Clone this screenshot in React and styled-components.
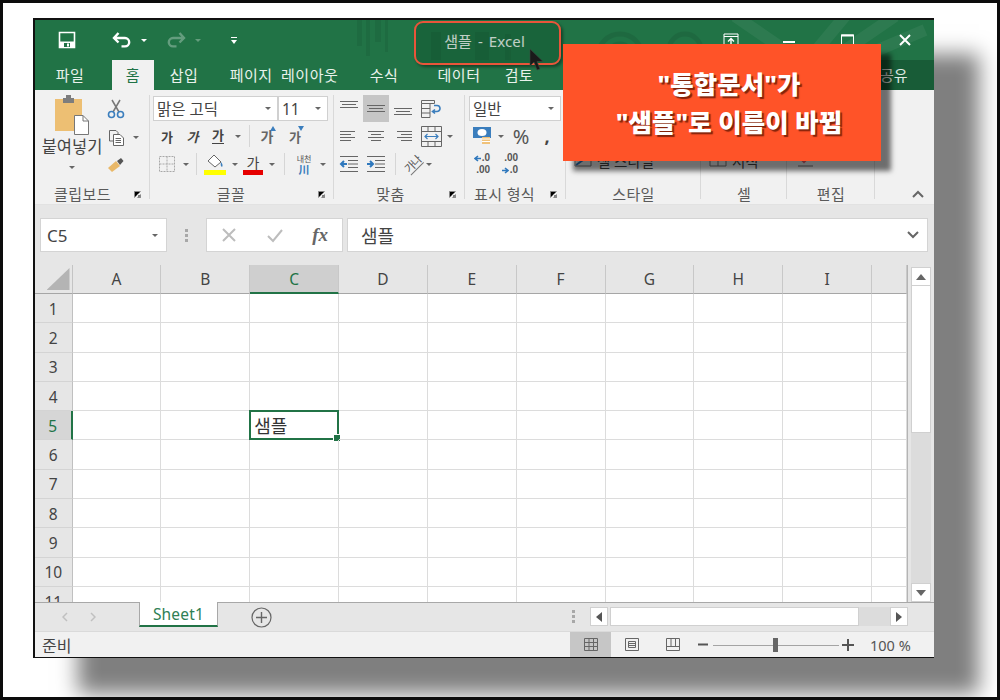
import styled, { createGlobalStyle } from "styled-components";

const GlobalStyle = createGlobalStyle`
  html, body { margin: 0; padding: 0; background: #fff; }
  * { box-sizing: border-box; }
  body { font-family: "Noto Sans", "Noto Sans CJK KR", sans-serif; }
`;

const Frame = styled.div`
  width: 1000px;
  height: 700px;
  border: 3px solid #0c0c0c;
  padding: 15px 0 0 30px;
  background: #fff;
  overflow: hidden;
`;

const Win = styled.div`
  position: relative;
  width: 901px;
  height: 640px;
  display: flex;
  flex-direction: column;
  background: #f1f1f1;
  border-top: 2px solid #111;
  border-left: 2px solid #111;
  border-bottom: 1px solid #111;
  box-shadow: 45px 36px 20px #7f7f7f;
`;

const TitleBar = styled.div`
  position: relative;
  height: 40px;
  display: grid;
  grid-template-columns: 1fr auto 1fr;
  align-items: center;
  background: #217346;
  color: #fff;
  overflow: hidden;
`;

const Watermark = styled.svg`
  position: absolute;
  left: 0;
  top: 0;
  width: 899px;
  height: 70px;
`;

const Qat = styled.div`
  position: relative;
  display: flex;
  align-items: center;
  padding-left: 22px;
`;

const Slot = styled.div`
  width: ${(p) => p.$w}px;
  height: ${(p) => p.$h || 26}px;
  flex: none;
  display: flex;
  align-items: center;
  justify-content: center;
  position: relative;
  color: ${(p) => p.$color || "#444"};
  font-size: ${(p) => p.$size || 13}px;
  font-weight: ${(p) => p.$weight || 400};
  font-style: ${(p) => (p.$italic ? "italic" : "normal")};
  background: ${(p) => (p.$on ? "#c6c6c6" : "transparent")};
`;

const Caret = styled.i`
  display: block;
  width: 0;
  height: 0;
  border-left: 3px solid transparent;
  border-right: 3px solid transparent;
  border-top: 3px solid ${(p) => p.$color || "#666"};
`;

const TitleText = styled.div`
  position: relative;
  font-size: 15px;
  color: #f6faf7;
  letter-spacing: 0.1px;
  word-spacing: 2px;
`;

const WinBtns = styled.div`
  position: relative;
  display: flex;
  justify-content: flex-end;
`;

const TabRow = styled.div`
  position: relative;
  height: 30px;
  display: flex;
  background: #217346;
`;

const Tab = styled.div`
  width: ${(p) => p.$w}px;
  margin-right: ${(p) => p.$mr || 0}px;
  padding-bottom: 2px;
  display: flex;
  align-items: center;
  justify-content: center;
  white-space: nowrap;
  font-size: 15px;
  letter-spacing: 0.5px;
  word-spacing: 4px;
  color: ${(p) => (p.$active ? "#217346" : "#e9f2ec")};
  background: ${(p) => (p.$active ? "#f1f1f1" : "transparent")};
`;

const ShareTab = styled.div`
  margin-left: auto;
  width: 56px;
  background: #185c37;
  display: flex;
  align-items: center;
  padding: 0 0 2px 2px;
  font-size: 15px;
  color: #dfeae3;
`;

const Ribbon = styled.div`
  position: relative;
  height: 115px;
  display: flex;
  background: #f1f1f1;
  border-bottom: 1px solid #e2e2e2;
`;

const Group = styled.div`
  width: ${(p) => p.$w}px;
  flex: none;
  display: flex;
  flex-direction: column;
  padding: 5px 0 0 ${(p) => p.$pad || 0}px;
  position: relative;
  &::after {
    content: "";
    position: absolute;
    right: 0;
    top: 5px;
    bottom: 5px;
    width: 1px;
    background: #d9d9d9;
  }
`;

const GroupBody = styled.div`
  height: 87px;
  display: flex;
  flex-direction: ${(p) => (p.$row ? "row" : "column")};
  justify-content: ${(p) => (p.$end ? "flex-end" : "flex-start")};
`;

const GroupLabel = styled.div`
  flex: 1;
  display: flex;
  align-items: center;
  justify-content: center;
  position: relative;
  font-size: 15px;
  letter-spacing: 0.4px;
  color: #5a5a5a;
  margin-left: ${(p) => (p.$pad ? -p.$pad : 0)}px;
  padding-right: ${(p) => p.$right || 0}px;
`;

const Launcher = styled.svg`
  position: absolute;
  right: 9px;
  top: 9px;
  width: 7px;
  height: 7px;
`;

const Row = styled.div`
  display: flex;
  align-items: center;
  height: ${(p) => p.$h || 28}px;
`;

const Sep = styled.div`
  width: 1px;
  height: 22px;
  flex: none;
  margin: 0 ${(p) => p.$m}px;
  background: #d6d6d6;
`;

const Select = styled.div`
  width: ${(p) => p.$w}px;
  height: 25px;
  flex: none;
  display: flex;
  align-items: center;
  justify-content: space-between;
  padding: 0 6px 0 3px;
  background: #fff;
  border: 1px solid #d0d0d0;
  font-size: 15.5px;
  color: #444;
`;

const PasteCol = styled.div`
  width: 70px;
  display: flex;
  flex-direction: column;
  align-items: center;
  font-size: 16.5px;
  color: #444;
  padding-left: 4px;
`;

const PasteLabel = styled.div`
  margin: 2px 0 9px;
  line-height: 20px;
  white-space: nowrap;
`;

const ClipCol = styled.div`
  display: flex;
  flex-direction: column;
`;

const Under = styled.span`
  border-bottom: 1px solid #444;
  line-height: 15px;
`;

const GrowMark = styled.svg`
  position: absolute;
  top: 3px;
  right: ${(p) => p.$right}px;
  width: 6px;
  height: 5px;
`;

const ColorBar = styled.span`
  position: absolute;
  left: ${(p) => p.$left}px;
  right: ${(p) => p.$left}px;
  bottom: 2px;
  height: 5px;
  background: ${(p) => p.$c};
`;

const Phonetic = styled.div`
  display: flex;
  flex-direction: column;
  align-items: center;
  font-size: 8px;
  line-height: 10px;
  color: #555;
  b {
    color: #3b7ebd;
    font-size: 11px;
    line-height: 11px;
    font-weight: 700;
  }
`;

const Rotated = styled.span`
  display: block;
  transform: rotate(-45deg);
  font-size: 11px;
  line-height: 12px;
  color: #555;
  letter-spacing: -1px;
  border-bottom: 1px solid #777;
`;

const Decimal = styled.div`
  display: flex;
  flex-direction: column;
  align-items: ${(p) => (p.$end ? "flex-end" : "flex-start")};
  font-family: "Liberation Sans", sans-serif;
  font-size: 10px;
  line-height: 12px;
  font-weight: 700;
  color: #555;
  span {
    display: flex;
    align-items: center;
    gap: 1px;
  }
`;

const HiddenLine = styled.div`
  display: flex;
  align-items: center;
  gap: ${(p) => p.$gap || 6}px;
  height: 28px;
  margin-bottom: 8px;
  padding-left: ${(p) => p.$left}px;
  font-size: 14.5px;
  color: #444;
  white-space: nowrap;
`;

const Collapse = styled.div`
  flex: 1;
  display: flex;
  align-items: flex-end;
  justify-content: flex-end;
  padding: 0 10px 6px 0;
`;

const FormulaBar = styled.div`
  height: 60px;
  display: flex;
  align-items: flex-start;
  padding: 13px 0 0 5px;
  background: #e6e6e6;
`;

const FieldBox = styled.div`
  height: 34px;
  width: ${(p) => p.$w}px;
  flex: none;
  margin-left: ${(p) => p.$ml || 0}px;
  display: flex;
  align-items: center;
  justify-content: space-between;
  padding: 0 ${(p) => p.$pr || 8}px 0 ${(p) => p.$pl || 6}px;
  background: #fff;
  border: 1px solid #d4d4d4;
  font-size: ${(p) => p.$size || 17}px;
  color: #444;
`;

const FxMark = styled.em`
  font-family: "Liberation Serif", serif;
  font-size: 19px;
  font-weight: 700;
  color: #666;
`;

const Grip = styled.div`
  width: 39px;
  height: 34px;
  flex: none;
  display: flex;
  flex-direction: column;
  align-items: center;
  justify-content: center;
  gap: 2px;
  i {
    width: 3px;
    height: 3px;
    background: #a8a8a8;
  }
`;

const SheetArea = styled.div`
  height: 337px;
  display: flex;
  background: #e6e6e6;
`;

const Sheet = styled.div`
  width: 873px;
  height: 337px;
  flex: none;
  overflow: hidden;
  display: grid;
  grid-template-columns: 37.5px repeat(9, 88.85px) 1fr;
  grid-template-rows: 29px;
  grid-auto-rows: 29.3px;
  background: #fff;
  border-right: 1px solid #b4b4b4;
`;

const Corner = styled.div`
  background: #e6e6e6;
  border-right: 1px solid #c4c4c4;
  border-bottom: 1px solid #a6a6a6;
  position: relative;
  &::after {
    content: "";
    position: absolute;
    right: 2px;
    bottom: 3px;
    width: 23px;
    height: 22px;
    background: #b4b4b4;
    clip-path: polygon(100% 0, 100% 100%, 0 100%);
  }
`;

const ColHead = styled.div`
  display: flex;
  align-items: center;
  justify-content: center;
  font-size: 15.5px;
  background: ${(p) => (p.$on ? "#cfcfcf" : "#e6e6e6")};
  color: ${(p) => (p.$on ? "#217346" : "#444")};
  border-right: 1px solid #c8c8c8;
  border-bottom: ${(p) => (p.$on ? "2px solid #217346" : "1px solid #a6a6a6")};
`;

const RowHead = styled.div`
  display: flex;
  align-items: center;
  justify-content: center;
  padding-top: 1px;
  font-size: 15.5px;
  background: ${(p) => (p.$on ? "#d6d6d6" : "#e6e6e6")};
  color: ${(p) => (p.$on ? "#217346" : "#444")};
  border-right: ${(p) => (p.$on ? "2px solid #217346" : "1px solid #c0c0c0")};
  border-bottom: 1px solid #d4d4d4;
`;

const Cell = styled.div`
  position: relative;
  display: flex;
  align-items: center;
  padding-left: 4px;
  font-size: 18px;
  color: #333;
  border-right: 1px solid #dcdcdc;
  border-bottom: 1px solid #dcdcdc;
`;

const Selection = styled.div`
  position: absolute;
  inset: -1px -1px -1px -1px;
  border: 2px solid #217346;
  &::after {
    content: "";
    position: absolute;
    right: -4px;
    bottom: -4px;
    width: 6px;
    height: 6px;
    background: #217346;
    border: 1px solid #fff;
  }
`;

const VScroll = styled.div`
  flex: 1;
  display: flex;
  flex-direction: column;
  padding: 2px 3px 0 3px;
`;

const ScrollBtn = styled.div`
  width: ${(p) => p.$w || 19}px;
  height: ${(p) => p.$h || 19}px;
  margin-left: ${(p) => p.$ml || 0}px;
  flex: none;
  display: flex;
  align-items: center;
  justify-content: center;
  background: #fff;
  border: 1px solid #d0d0d0;
`;

const VThumb = styled.div`
  height: 147px;
  background: #fff;
  border: 1px solid #d0d0d0;
  border-top: none;
`;

const VTrack = styled.div`
  flex: 1;
  background: #dcdcdc;
`;

const SheetBar = styled.div`
  height: 29px;
  display: flex;
  align-items: flex-start;
  background: #e6e6e6;
  border-top: 1px solid #a8a8a8;
`;

const SheetNav = styled.div`
  width: 104px;
  height: 28px;
  display: flex;
  align-items: center;
  padding-left: 27px;
  gap: 22px;
`;

const SheetTab = styled.div`
  width: 79px;
  height: 25px;
  margin-top: -1px;
  display: flex;
  align-items: center;
  justify-content: center;
  background: #fff;
  border-left: 1px solid #a8a8a8;
  border-right: 1px solid #a8a8a8;
  border-bottom: 2px solid #217346;
  color: #2f8055;
  font-size: 15.5px;
  letter-spacing: 0.2px;
`;

const AddSheet = styled.div`
  margin: 4px 0 0 33px;
  width: 21px;
  height: 21px;
  display: flex;
  align-items: center;
  justify-content: center;
`;

const HScrollWrap = styled.div`
  margin-left: auto;
  width: 374px;
  height: 28px;
  padding: 4px 26px 0 0;
  display: flex;
  align-items: flex-start;
`;

const Dots = styled(Grip)`
  width: 26px;
  height: 18px;
`;

const HThumb = styled.div`
  width: 249px;
  height: 19px;
  margin-left: 2px;
  background: #fff;
  border: 1px solid #d0d0d0;
`;

const HTrack = styled.div`
  flex: 1;
  height: 19px;
  background: #dcdcdc;
`;

const StatusBar = styled.div`
  flex: 1;
  display: flex;
  align-items: stretch;
  background: #f1f1f1;
  border-top: 1px solid #dadada;
  font-size: 16px;
  color: #444;
`;

const Ready = styled.div`
  display: flex;
  align-items: center;
  padding-left: 7px;
`;

const StatusRight = styled.div`
  margin-left: auto;
  display: flex;
  align-items: stretch;
  padding-right: 22px;
`;

const ViewBtn = styled.div`
  width: 41px;
  display: flex;
  align-items: center;
  justify-content: center;
  background: ${(p) => (p.$on ? "#c6c6c6" : "transparent")};
`;

const ZoomMark = styled.div`
  width: ${(p) => p.$w}px;
  display: flex;
  align-items: center;
  justify-content: center;
  svg { display: block; }
`;

const ZoomTrack = styled.div`
  width: 126px;
  position: relative;
  &::before {
    content: "";
    position: absolute;
    left: 0;
    right: 0;
    top: 50%;
    height: 1px;
    background: #a4a4a4;
  }
`;

const ZoomThumb = styled.i`
  position: absolute;
  left: 60px;
  top: 6px;
  width: 5px;
  height: 14px;
  background: #666;
`;

const ZoomText = styled.div`
  width: 42px;
  margin-left: 13px;
  display: flex;
  align-items: center;
  white-space: nowrap;
  font-size: 14.5px;
  color: #555;
`;

const TitleMark = styled.div`
  position: absolute;
  left: 379px;
  top: 1px;
  width: 147px;
  height: 44px;
  border: 2.5px solid #e9553a;
  border-radius: 9px;
  background: rgba(0, 50, 25, 0.22);
  box-shadow: 2px 2px 3px rgba(0, 0, 0, 0.4);
`;

const Pointer = styled.svg`
  position: absolute;
  left: 494px;
  top: 28px;
  width: 16px;
  height: 24px;
`;

const Callout = styled.div`
  position: absolute;
  left: 528px;
  top: 24px;
  width: 318px;
  height: 117px;
  padding-left: 14px;
  display: flex;
  flex-direction: column;
  align-items: center;
  justify-content: center;
  background: #ff5328;
  color: #fff;
  font-size: 25.5px;
  font-weight: 800;
  line-height: 38px;
  white-space: nowrap;
  text-shadow: 2px 2px 1px rgba(90, 20, 0, 0.75);
  box-shadow: 10px 10px 5px rgba(0, 0, 0, 0.55);
`;

const Icon = ({ w = 16, h = 16, children, ...rest }) => (
  <svg width={w} height={h} viewBox={`0 0 ${w} ${h}`} fill="none" {...rest}>
    {children}
  </svg>
);

const LauncherMark = () => (
  <Launcher viewBox="0 0 7 7">
    <path d="M.5 6.5V.5H6.5M3 3L6.5 6.5M6.5 3.5V6.5H3.5" stroke="#888" />
  </Launcher>
);

const Lines = ({ rows, stroke = "#666" }) => (
  <Icon w={20} h={20}>
    {rows.map(([x1, x2, y]) => (
      <path key={y} d={`M${x1} ${y + 0.5}H${x2}`} stroke={stroke} />
    ))}
  </Icon>
);

const alignRows = (kind) => {
  const top = kind === "top" ? 2 : kind === "mid" ? 6 : 9;
  if (kind === "top" || kind === "mid" || kind === "bot") {
    return [[1, 19, top], [3, 17, top + 3], [1, 19, top + 6]];
  }
  if (kind === "left") return [[1, 16, 5], [1, 12, 8], [1, 16, 11], [1, 12, 14]];
  if (kind === "center") return [[2, 18, 5], [5, 15, 8], [2, 18, 11], [5, 15, 14]];
  return [[4, 19, 5], [8, 19, 8], [4, 19, 11], [8, 19, 14]];
};

const columns = ["A", "B", "C", "D", "E", "F", "G", "H", "I", ""];
const rowNums = [1, 2, 3, 4, 5, 6, 7, 8, 9, 10, 11];

export default function App() {
  return (
    <Frame>
      <GlobalStyle />
      <Win>
        <TitleBar>
          <Watermark viewBox="0 0 899 70">
            <g fill="#000" opacity="0.06">
              <rect x="322" y="-2" width="5" height="28" />
              <rect x="331" y="-2" width="4" height="38" />
              <rect x="340" y="-2" width="6" height="24" />
              <rect x="350" y="-2" width="3" height="34" />
              <rect x="396" y="12" width="10" height="30" />
              <rect x="440" y="12" width="14" height="30" />
              <rect x="470" y="14" width="6" height="30" />
            </g>
            <g stroke="#000" opacity="0.08" fill="none" strokeWidth="5">
              <circle cx="585" cy="36" r="12" />
              <circle cx="585" cy="36" r="22" />
              <circle cx="650" cy="30" r="16" />
            </g>
            <g stroke="#fff" opacity="0.05" strokeWidth="12">
              <path d="M700 -4L770 44" />
              <path d="M810 -4L770 44" />
              <path d="M860 -4L790 44" />
              <path d="M890 10L810 44" />
            </g>
          </Watermark>
          <Qat>
            <Slot $w={20} $h={40}>
              <Icon w={18} h={18}>
                <path d="M1.5 1.5H16.5V16.5H1.5Z" stroke="#fff" strokeWidth="1.6" />
                <path d="M2 10.5H16V16H2Z" fill="#fff" />
                <path d="M6 12H12V16H6Z" fill="#217346" />
                <path d="M9 12.5H11V15.5H9Z" fill="#fff" />
              </Icon>
            </Slot>
            <Slot $w={34} $h={40} />
            <Slot $w={22} $h={40}>
              <Icon w={20} h={18}>
                <path d="M2 7H13A4.2 4.2 0 0 1 13 15.4H9.5M6.5 2L2 7L6.5 11.5" stroke="#fff" strokeWidth="2.4" />
              </Icon>
            </Slot>
            <Slot $w={22} $h={40}><Caret $color="#fff" /></Slot>
            <Slot $w={10} $h={40} />
            <Slot $w={22} $h={40}>
              <Icon w={20} h={18} opacity="0.3">
                <path d="M18 7H7A4.2 4.2 0 0 0 7 15.4H10.5M13.5 2L18 7L13.5 11.5" stroke="#fff" strokeWidth="2.4" />
              </Icon>
            </Slot>
            <Slot $w={22} $h={40}><Caret $color="#ffffff4d" /></Slot>
            <Slot $w={14} $h={40} />
            <Slot $w={22} $h={40}>
              <Icon w={8} h={9}>
                <path d="M1 1.5H7" stroke="#fff" />
                <path d="M1 4H7L4 8Z" fill="#fff" />
              </Icon>
            </Slot>
          </Qat>
          <TitleText>샘플 - Excel</TitleText>
          <WinBtns>
            <Slot $w={58} $h={40}>
              <Icon w={16} h={14}>
                <path d="M1 1H15V13H1Z" stroke="#fff" />
                <path d="M1 3.5H15" stroke="#fff" />
                <path d="M8 12V6M5 8.5L8 5.5L11 8.5" stroke="#fff" strokeWidth="1.4" />
              </Icon>
            </Slot>
            <Slot $w={58} $h={40}>
              <Icon w={12} h={12}><path d="M0 8H12" stroke="#fff" strokeWidth="2" /></Icon>
            </Slot>
            <Slot $w={58} $h={40}>
              <Icon w={13} h={13}>
                <path d="M.5 1H12.5V12.5H.5Z" stroke="#fff" />
                <path d="M0 1.5H13" stroke="#fff" strokeWidth="2" />
              </Icon>
            </Slot>
            <Slot $w={58} $h={40}>
              <Icon w={14} h={14}><path d="M2 2L12 12M12 2L2 12" stroke="#fff" strokeWidth="2" /></Icon>
            </Slot>
          </WinBtns>
        </TitleBar>

        <TabRow>
          <Tab $w={70} $mr={7}>파일</Tab>
          <Tab $active $w={42}>홈</Tab>
          <Tab $w={60}>삽입</Tab>
          <Tab $w={140}>페이지 레이아웃</Tab>
          <Tab $w={60}>수식</Tab>
          <Tab $w={90}>데이터</Tab>
          <Tab $w={30}>검토</Tab>
          <ShareTab>공유</ShareTab>
        </TabRow>

        <Ribbon>
          <Group $w={115}>
            <GroupBody $row>
              <PasteCol>
                <Icon w={36} h={40}>
                  <path d="M1 4H28V36H1Z" fill="#edbf73" />
                  <path d="M9 3H20V8H9Z" fill="#7d7d7d" />
                  <path d="M12 0H17V4H12Z" fill="#7d7d7d" />
                  <path d="M20.5 20.5H29L34.5 26V39.5H20.5Z" fill="#fff" stroke="#777" />
                  <path d="M29 20.5V26H34.5" stroke="#777" />
                </Icon>
                <PasteLabel>붙여넣기</PasteLabel>
                <Caret />
              </PasteCol>
              <ClipCol>
                <Slot $w={22} $h={28}>
                  <Icon w={18} h={20}>
                    <path d="M5 1L12 13M13 1L6 13" stroke="#777" strokeWidth="1.5" />
                    <circle cx="4.5" cy="15.5" r="3" stroke="#3b7ebd" strokeWidth="1.6" />
                    <circle cx="13.5" cy="15.5" r="3" stroke="#3b7ebd" strokeWidth="1.6" />
                  </Icon>
                </Slot>
                <Row>
                  <Slot $w={22} $h={28}>
                    <Icon w={17} h={17}>
                      <path d="M1.5 1.5H8L10 3.5V5M1.5 1.5V12H5" stroke="#666" />
                      <path d="M5.5 5.5H12L15.5 9V16.5H5.5Z" fill="#fff" stroke="#666" />
                      <path d="M7.5 9.5H13M7.5 11.5H13M7.5 13.5H13" stroke="#666" />
                    </Icon>
                  </Slot>
                  <Slot $w={18} $h={28}><Caret /></Slot>
                </Row>
                <Slot $w={22} $h={27}>
                  <Icon w={18} h={16}>
                    <path d="M1 11L9 4L13 9L5 15Z" fill="#e9b868" />
                    <path d="M10 4L14 1L16.5 4L13 8Z" fill="#555" />
                  </Icon>
                </Slot>
              </ClipCol>
            </GroupBody>
            <GroupLabel $right={20}>
              클립보드
              <LauncherMark />
            </GroupLabel>
          </Group>

          <Group $w={184} $pad={3}>
            <GroupBody>
              <Row $h={27}>
                <Select $w={125}>맑은 고딕<Caret /></Select>
                <Select $w={50}>11<Caret /></Select>
              </Row>
              <Row>
                <Slot $w={28} $weight={700}>가</Slot>
                <Slot $w={23} $weight={700} $italic>가</Slot>
                <Slot $w={28} $weight={700}><Under>가</Under></Slot>
                <Slot $w={12}><Caret /></Slot>
                <Sep $m={5} />
                <Slot $w={24} $weight={700} $color="#666" $size={14}>
                  가
                  <GrowMark $right={3} viewBox="0 0 6 5"><path d="M0 5L3 0L6 5Z" fill="#3b7ebd" /></GrowMark>
                </Slot>
                <Slot $w={32} $weight={700} $color="#666" $size={13}>
                  가
                  <GrowMark $right={7} viewBox="0 0 6 5"><path d="M0 0L3 5L6 0Z" fill="#3b7ebd" /></GrowMark>
                </Slot>
              </Row>
              <Row>
                <Slot $w={27}>
                  <Icon w={18} h={18}>
                    <path d="M1.5 1.5H16.5V16.5H1.5ZM9 1.5V16.5M1.5 9H16.5" stroke="#a8a8a8" strokeDasharray="2 1" />
                  </Icon>
                </Slot>
                <Slot $w={12}><Caret /></Slot>
                <Sep $m={4} />
                <Slot $w={28}>
                  <Icon w={18} h={15} style={{ marginTop: -6 }}>
                    <path d="M8 1L15 8L9 13L2 7Z" stroke="#666" fill="#fff" />
                    <path d="M15 8Q17.5 11 16 13Q14 12 15 8Z" fill="#3b7ebd" />
                  </Icon>
                  <ColorBar $left={3} $c="#ffff00" />
                </Slot>
                <Slot $w={12}><Caret /></Slot>
                <Slot $w={24} $size={14}>
                  <span style={{ marginTop: -5 }}>가</span>
                  <ColorBar $left={2} $c="#e60000" />
                </Slot>
                <Slot $w={14}><Caret /></Slot>
                <Sep $m={5} />
                <Slot $w={28}><Phonetic>내천<b>川</b></Phonetic></Slot>
                <Slot $w={10}><Caret /></Slot>
              </Row>
            </GroupBody>
            <GroupLabel $pad={3} $right={22}>
              글꼴
              <LauncherMark />
            </GroupLabel>
          </Group>

          <Group $w={131} $pad={1}>
            <GroupBody>
              <Row $h={27}>
                <Slot $w={28} $h={27}><Lines rows={alignRows("top")} /></Slot>
                <Slot $w={26} $h={27} $on><Lines rows={alignRows("mid")} /></Slot>
                <Slot $w={28} $h={27}><Lines rows={alignRows("bot")} /></Slot>
                <Slot $w={28} $h={27}>
                  <Icon w={22} h={20}>
                    <path d="M1.5 1.5H14.5V4.5H1.5ZM1.5 4.5V18.5H10V4.5M1.5 9.5H10M1.5 14H10" stroke="#666" />
                    <path d="M14 6.5H17A3 3 0 0 1 17 12.5H13M15 10.5L12.5 12.5L15 14.5" stroke="#3b7ebd" strokeWidth="1.6" />
                  </Icon>
                </Slot>
              </Row>
              <Row>
                <Slot $w={28}><Lines rows={alignRows("left")} /></Slot>
                <Slot $w={26}><Lines rows={alignRows("center")} /></Slot>
                <Slot $w={28}><Lines rows={alignRows("right")} /></Slot>
                <Slot $w={28}>
                  <Icon w={21} h={21}>
                    <path d="M.5 .5H20.5V20.5H.5ZM.5 5.5H20.5M.5 15.5H20.5M7 .5V5.5M14 .5V5.5M7 15.5V20.5M14 15.5V20.5" stroke="#666" />
                    <path d="M4 10.5H17M6.5 8L4 10.5L6.5 13M14.5 8L17 10.5L14.5 13" stroke="#3b7ebd" strokeWidth="1.2" />
                  </Icon>
                </Slot>
                <Slot $w={10}><Caret /></Slot>
              </Row>
              <Row>
                <Slot $w={28}>
                  <Icon w={20} h={18}>
                    <path d="M1 1.5H19M9 5.5H19M9 9H19M9 12.5H19M1 16.5H19" stroke="#666" />
                    <path d="M2 9H8M5 6L2 9L5 12" stroke="#2f78bd" strokeWidth="2" />
                  </Icon>
                </Slot>
                <Slot $w={26}>
                  <Icon w={20} h={18}>
                    <path d="M1 1.5H19M9 5.5H19M9 9H19M9 12.5H19M1 16.5H19" stroke="#666" />
                    <path d="M1 9H7M4 6L7 9L4 12" stroke="#2f78bd" strokeWidth="2" />
                  </Icon>
                </Slot>
                <Sep $m={6} />
                <Slot $w={22}><Rotated>가나</Rotated></Slot>
                <Slot $w={10}><Caret /></Slot>
              </Row>
            </GroupBody>
            <GroupLabel $pad={1} $right={18}>
              맞춤
              <LauncherMark />
            </GroupLabel>
          </Group>

          <Group $w={101} $pad={4}>
            <GroupBody>
              <Row $h={27}>
                <Select $w={92}>일반<Caret /></Select>
              </Row>
              <Row>
                <Slot $w={26}>
                  <Icon w={21} h={20}>
                    <path d="M1 1H19V12H1Z" fill="#3b7ebd" />
                    <ellipse cx="10" cy="6.5" rx="4.5" ry="3.5" fill="#fff" />
                    <path d="M10 11H18V18H10Z" fill="#f0c27a" />
                    <path d="M10 13H18M10 15.5H18" stroke="#fff" />
                  </Icon>
                </Slot>
                <Slot $w={12}><Caret /></Slot>
                <Slot $w={28} $size={20} $color="#555">%</Slot>
                <Slot $w={24} $size={18} $weight={700}>,</Slot>
              </Row>
              <Row>
                <Slot $w={26}>
                  <Decimal $end>
                    <span>
                      <Icon w={7} h={7}><path d="M7 3.5H2M4 1L1 3.5L4 6" stroke="#2f78bd" strokeWidth="1.6" /></Icon>
                      .0
                    </span>
                    <span>.00</span>
                  </Decimal>
                </Slot>
                <Slot $w={2} />
                <Slot $w={26}>
                  <Decimal $end>
                    <span>.00</span>
                    <span>
                      <Icon w={7} h={7}><path d="M0 3.5H5M3 1L6 3.5L3 6" stroke="#2f78bd" strokeWidth="1.6" /></Icon>
                      .0
                    </span>
                  </Decimal>
                </Slot>
              </Row>
            </GroupBody>
            <GroupLabel $pad={4} $right={22}>
              표시 형식
              <LauncherMark />
            </GroupLabel>
          </Group>

          <Group $w={135}>
            <GroupBody $end>
              <HiddenLine $left={8} $gap={5}>
                <Icon w={18} h={14}>
                  <path d="M1 1H17V13H1Z" stroke="#777" />
                  <path d="M2 12L12 5" stroke="#2f78bd" strokeWidth="2" />
                </Icon>
                셀 스타일
              </HiddenLine>
            </GroupBody>
            <GroupLabel>스타일</GroupLabel>
          </Group>

          <Group $w={86}>
            <GroupBody $end>
              <HiddenLine $left={8} $gap={5}>
                <Icon w={18} h={14}><path d="M1 1H17V13H1ZM1 7H17M9 1V13" stroke="#777" /></Icon>
                서식
              </HiddenLine>
            </GroupBody>
            <GroupLabel>셀</GroupLabel>
          </Group>

          <Group $w={88}>
            <GroupBody $end>
              <HiddenLine $left={8}>
                <Icon w={20} h={14}>
                  <path d="M2 2L9 9L16 2" stroke="#d76a7a" strokeWidth="2" />
                  <path d="M3 13H18" stroke="#777" />
                </Icon>
              </HiddenLine>
            </GroupBody>
            <GroupLabel>편집</GroupLabel>
          </Group>

          <Collapse>
            <Icon w={12} h={8}><path d="M1 7L6 2L11 7" stroke="#666" strokeWidth="2" /></Icon>
          </Collapse>
        </Ribbon>

        <FormulaBar>
          <FieldBox $w={127}>C5<Caret /></FieldBox>
          <Grip><i /><i /><i /></Grip>
          <FieldBox $w={137} $pl={14} $pr={14}>
            <Icon w={16} h={16}><path d="M2 2L14 14M14 2L2 14" stroke="#bdbdbd" strokeWidth="2" /></Icon>
            <Icon w={18} h={16}><path d="M2 9L7 14L16 3" stroke="#bdbdbd" strokeWidth="2" /></Icon>
            <FxMark>fx</FxMark>
          </FieldBox>
          <FieldBox $w={581} $ml={4} $pl={13} $size={18}>
            샘플
            <Icon w={12} h={8}><path d="M1 1L6 6L11 1" stroke="#666" strokeWidth="2" /></Icon>
          </FieldBox>
        </FormulaBar>

        <SheetArea>
          <Sheet>
            <Corner />
            {columns.map((c, i) => (
              <ColHead key={i} $on={c === "C"}>{c}</ColHead>
            ))}
            {rowNums.map((n) => [
              <RowHead key={"h" + n} $on={n === 5}>{n}</RowHead>,
              ...columns.map((c, i) => (
                <Cell key={n + "-" + i}>
                  {n === 5 && c === "C" && <><Selection />샘플</>}
                </Cell>
              )),
            ])}
          </Sheet>
          <VScroll>
            <ScrollBtn $w={20}>
              <Icon w={10} h={6}><path d="M0 6L5 0L10 6Z" fill="#666" /></Icon>
            </ScrollBtn>
            <VThumb />
            <VTrack />
            <ScrollBtn $w={20}>
              <Icon w={10} h={6}><path d="M0 0L5 6L10 0Z" fill="#666" /></Icon>
            </ScrollBtn>
          </VScroll>
        </SheetArea>

        <SheetBar>
          <SheetNav>
            <Icon w={6} h={10}><path d="M5 1L1 5L5 9" stroke="#c0c0c0" strokeWidth="1.5" /></Icon>
            <Icon w={6} h={10}><path d="M1 1L5 5L1 9" stroke="#c0c0c0" strokeWidth="1.5" /></Icon>
          </SheetNav>
          <SheetTab>Sheet1</SheetTab>
          <AddSheet>
            <Icon w={21} h={21}>
              <circle cx="10.5" cy="10.5" r="9.5" stroke="#666" strokeWidth="1.2" />
              <path d="M5 10.5H16M10.5 5V16" stroke="#666" strokeWidth="1.4" />
            </Icon>
          </AddSheet>
          <HScrollWrap>
            <Dots><i /><i /><i /></Dots>
            <ScrollBtn $w={18} $ml={4}>
              <Icon w={6} h={10}><path d="M6 0V10L0 5Z" fill="#555" /></Icon>
            </ScrollBtn>
            <HThumb />
            <HTrack />
            <ScrollBtn $w={18}>
              <Icon w={6} h={10}><path d="M0 0V10L6 5Z" fill="#555" /></Icon>
            </ScrollBtn>
          </HScrollWrap>
        </SheetBar>

        <StatusBar>
          <Ready>준비</Ready>
          <StatusRight>
            <ViewBtn $on>
              <Icon w={14} h={13}><path d="M.5 .5H13.5V12.5H.5ZM.5 4.5H13.5M.5 8.5H13.5M5 .5V12.5M9.5 .5V12.5" stroke="#666" /></Icon>
            </ViewBtn>
            <ViewBtn>
              <Icon w={14} h={13}><path d="M.5 .5H13.5V12.5H.5ZM3.5 3.5H10.5V9.5H3.5ZM3.5 5.5H10.5M3.5 7.5H10.5" stroke="#666" /></Icon>
            </ViewBtn>
            <ViewBtn>
              <Icon w={14} h={13}><path d="M.5 .5H13.5V12.5H.5ZM.5 8.5H13.5M5 .5V8.5M9.5 .5V8.5" stroke="#666" /></Icon>
            </ViewBtn>
            <ZoomMark $w={20}><Icon w={10} h={3}><path d="M0 1.5H10" stroke="#555" strokeWidth="2" /></Icon></ZoomMark>
            <ZoomTrack><ZoomThumb /></ZoomTrack>
            <ZoomMark $w={18}><Icon w={12} h={12}><path d="M0 6H12M6 0V12" stroke="#555" strokeWidth="2" /></Icon></ZoomMark>
            <ZoomText>100 %</ZoomText>
          </StatusRight>
        </StatusBar>

        <TitleMark />
        <Pointer viewBox="0 0 16 24">
          <path d="M1 1V18L5 14L8 22L11 21L8 13.5H14Z" fill="#1a1a1a" stroke="#3a4a40" strokeWidth="0.6" />
        </Pointer>
        <Callout>
          <div>"통합문서"가</div>
          <div>"샘플"로 이름이 바뀜</div>
        </Callout>
      </Win>
    </Frame>
  );
}
